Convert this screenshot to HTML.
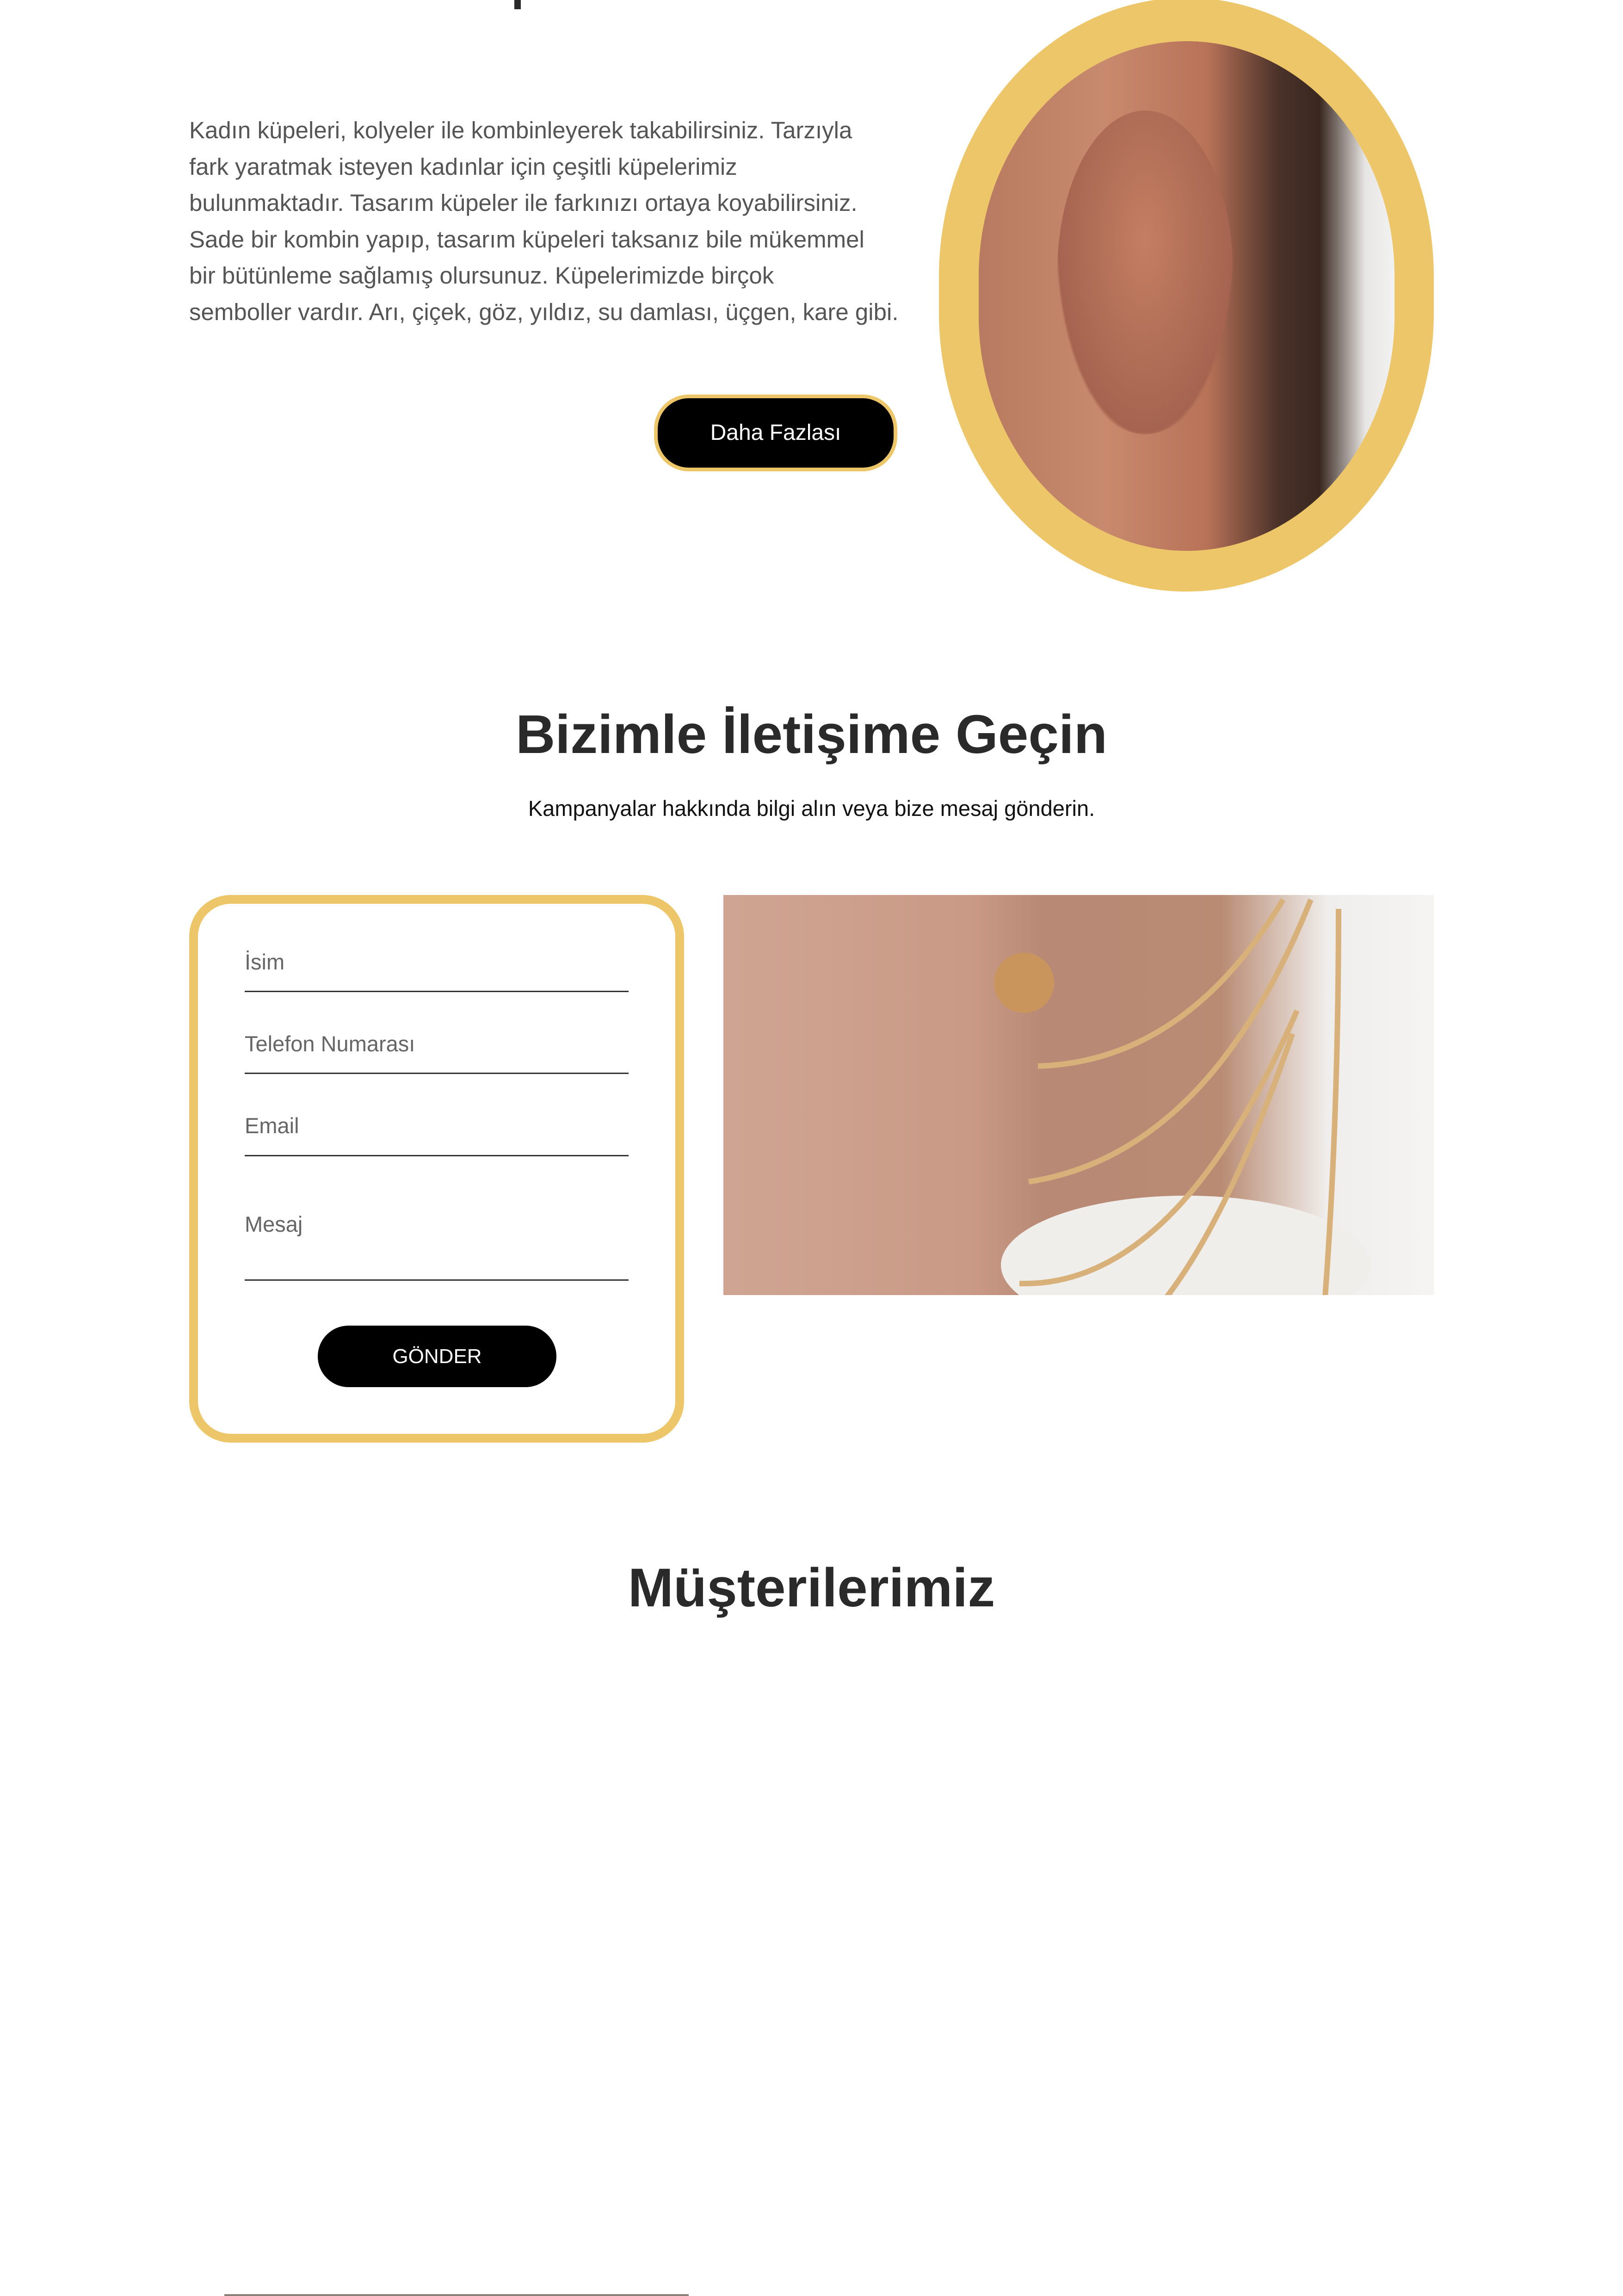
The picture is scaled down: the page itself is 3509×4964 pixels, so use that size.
<!DOCTYPE html>
<html><head><meta charset="utf-8"><style>
html,body{margin:0;padding:0;background:#fff;}
body{width:3509px;height:4964px;position:relative;overflow:hidden;font-family:"Liberation Sans",sans-serif;}
.abs{position:absolute;}
.para{left:409px;top:243px;width:1600px;font-size:51px;line-height:78.5px;color:#555;letter-spacing:0px;white-space:nowrap;}
.btn1{left:1414px;top:853px;width:510px;height:150px;border:8px solid #ecc669;background:#000;border-radius:75px;color:#fff;font-size:48px;text-align:center;line-height:150px;}
.h2{width:3509px;text-align:center;font-weight:bold;font-size:118px;color:#2a2a2a;letter-spacing:0px;}
.form{left:409px;top:1935px;width:1032px;height:1146px;border:19px solid #ecc669;border-radius:90px;}
.lbl{left:529px;font-size:47px;color:#666;}
.ln{left:529px;width:830px;height:3px;background:#333;}
.send{left:687px;top:2866px;width:516px;height:133px;background:#000;border-radius:67px;color:#fff;font-size:44px;text-align:center;line-height:133px;}
</style></head><body>
<div class="abs" style="left:1112px;top:0;width:14px;height:20px;background:#2a2a2a"></div>
<div class="abs para">Kadın küpeleri, kolyeler ile kombinleyerek takabilirsiniz. Tarzıyla<br>fark yaratmak isteyen kadınlar için çeşitli küpelerimiz<br>bulunmaktadır. Tasarım küpeler ile farkınızı ortaya koyabilirsiniz.<br>Sade bir kombin yapıp, tasarım küpeleri taksanız bile mükemmel<br>bir bütünleme sağlamış olursunuz. Küpelerimizde birçok<br>semboller vardır. Arı, çiçek, göz, yıldız, su damlası, üçgen, kare gibi.</div>
<div class="abs btn1">Daha Fazlası</div>
<div class="abs" style="left:2030px;top:-5px;width:1070px;height:1284px;border-radius:50%/47%;background:#ecc669"></div>
<div class="abs" style="left:2116px;top:89px;width:899px;height:1102px;border-radius:50%/46%;overflow:hidden;background:linear-gradient(90deg,#b87a60 0%,#c88a6e 30%,#b87258 55%,#4a3229 72%,#3a2820 82%,#e8e6e4 93%,#f2f2f2 100%)">
<div class="abs" style="left:170px;top:150px;width:380px;height:700px;border-radius:50%;background:radial-gradient(ellipse at 50% 40%,#c47e62,#a56450 70%,transparent 72%)"></div>
</div>
<div class="abs h2" style="top:1520px">Bizimle İletişime Geçin</div>
<div class="abs" style="left:0;width:3509px;top:1720px;text-align:center;font-size:47px;color:#111">Kampanyalar hakkında bilgi alın veya bize mesaj gönderin.</div>
<div class="abs form"></div>
<div class="abs lbl" style="top:2052px">İsim</div><div class="abs ln" style="top:2142px"></div>
<div class="abs lbl" style="top:2229px">Telefon Numarası</div><div class="abs ln" style="top:2319px"></div>
<div class="abs lbl" style="top:2406px">Email</div><div class="abs ln" style="top:2497px"></div>
<div class="abs lbl" style="top:2619px">Mesaj</div><div class="abs ln" style="top:2766px"></div>
<div class="abs send">GÖNDER</div>
<div class="abs" style="left:1564px;top:1935px;width:1536px;height:865px;overflow:hidden;background:linear-gradient(90deg,#cfa592 0%,#c99a86 35%,#b88a76 45%,#b98b73 70%,#f0eeec 85%,#f5f4f2 100%)">
<div class="abs" style="left:600px;top:650px;width:800px;height:300px;border-radius:50%;background:#f0eeeb"></div>
<svg class="abs" style="left:0;top:0" width="1536" height="865"><g fill="none" stroke="#d8b07a" stroke-width="12">
<path d="M680 370 Q1000 360 1210 10"/><path d="M660 620 Q1050 560 1270 10"/><path d="M640 840 Q980 850 1240 250"/><path d="M630 1030 Q950 1120 1230 300"/><path d="M1330 30 Q1330 900 1220 1560"/></g>
<circle cx="650" cy="190" r="65" fill="#c9955c"/></svg>
</div>
<div class="abs h2" style="top:3365px">Müşterilerimiz</div>
<div class="abs" style="left:485px;top:4960px;width:1004px;height:4px;background:#8a8078"></div>
</body></html>
